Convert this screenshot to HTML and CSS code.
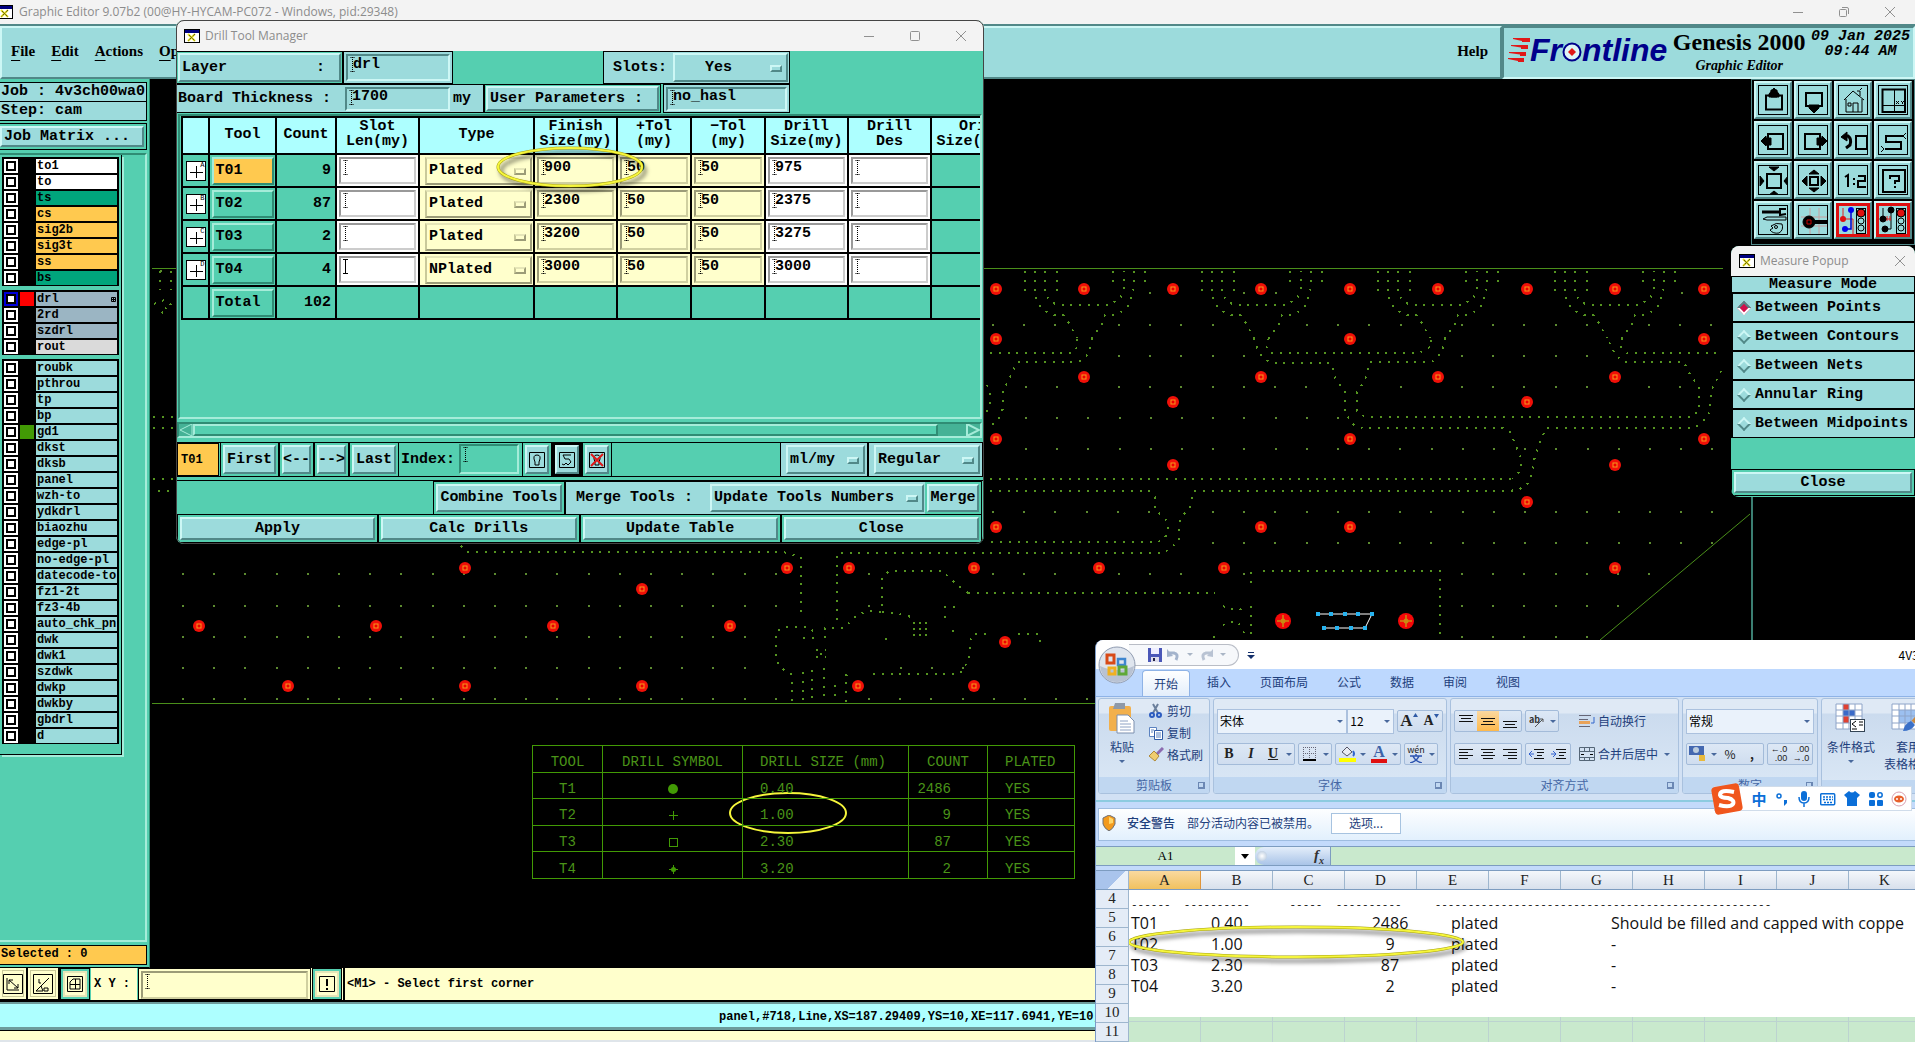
FILE: index.html
```html
<!DOCTYPE html>
<html lang="en">
<head>
<meta charset="utf-8">
<title>Graphic Editor 9.07b2</title>
<link rel="stylesheet" href="styles.css">
</head>
<body>
<svg class="defs" aria-hidden="true">
  <defs>
    <symbol id="xwin" viewBox="0 0 16 14"><rect x=".5" y=".5" width="15" height="13" fill="#fff" stroke="#000"/><rect x="1" y="1" width="14" height="3" fill="#000080"/><path d="M4 5L11 12M11 5L4 12" stroke="#e8e020" stroke-width="2"/><path d="M5 6L11 12M11 5L4 12" stroke="#222" stroke-width="1" stroke-dasharray="1 1"/></symbol>
    <g id="pad"><circle r="6" fill="#f01008"/><rect x="-2" y="-2" width="4" height="4" fill="#e00" stroke="#f59a1c"/></g>
    <g id="bigpad"><circle r="8" fill="#f40808"/><path d="M0-6V6M-6 0H6" stroke="#c98a12" stroke-width="1.5"/><circle r="2.5" fill="#c98a12"/></g>
    <g id="fan" class="trace"><path d="M1025 271V294M1057 271V294M1035 271V296L1039 305L1045 311L1054 315H1063L1067 320L1077 338M1045 271V293L1050 301L1057 305H1108L1120 299L1124 290V271M1113 271V286M1134 271V287L1129 305L1123 311L1114 315H1105L1101 326L1092 338M1145 271V286"/></g>
  </defs>
</svg>

<main class="editor">
  <header class="titlebar">
    <svg class="xicon" width="16" height="14"><use href="#xwin"/></svg>
    <h1 class="wintitle">Graphic Editor 9.07b2 (00@HY-HYCAM-PC072 - Windows, pid:29348)</h1>
    <div class="winbuttons">
      <button aria-label="Minimize"><svg width="12" height="12"><path d="M1 6.5H11"/></svg></button>
      <button aria-label="Restore"><svg width="12" height="12"><rect x="1.500" y="3.500" width="7" height="7" rx="1"/><path d="M4 1.500H9Q10.500 1.500 10.500 3V8"/></svg></button>
      <button aria-label="Close"><svg width="12" height="12"><path d="M1 1L11 11M11 1L1 11"/></svg></button>
    </div>
  </header>

  <div class="menurow">
    <nav class="menubar">
      <button><u>F</u>ile</button><button><u>E</u>dit</button><button><u>A</u>ctions</button><button><u>O</u>ptions</button>
      <button class="help">Help</button>
    </nav>
    <div class="brand">
      <div class="logo">
        <svg width="22" height="26" viewBox="0 0 22 26"><path d="M5 1H22V5H14V4L5 2ZM3 8H20V12H13V10.500L3 9ZM1 15H18V19H12V17.500L1 16ZM0 21H16V25H10V24L0 22Z" fill="#e01818"/></svg>
        <span class="logotext">Fr</span><svg class="target" width="20" height="20" viewBox="0 0 20 20"><circle cx="10" cy="10" r="8.500" fill="#dff5f5" stroke="#00008b" stroke-width="2"/><path d="M10 6L14 10L10 14L6 10Z" fill="#e01818"/></svg><span class="logotext">ntline</span>
      </div>
      <div class="product"><strong>Genesis 2000</strong><em>Graphic Editor</em></div>
      <time class="clock">09 Jan 2025<br>09:44 AM</time>
    </div>
  </div>

  <div class="workspace">
    <aside class="sidebar">
      <div class="jobinfo"><div>Job : 4v3ch00wa0</div><div>Step: cam</div></div>
      <div class="btnframe"><button class="btn matrix">Job Matrix ...</button></div>
      <div class="layerarea">
        <div class="layers">
          <div class="group">
            <label class="layer"><input type="checkbox"><span class="white">to1</span></label>
            <label class="layer"><input type="checkbox"><span class="white">to</span></label>
            <label class="layer"><input type="checkbox"><span class="green">ts</span></label>
            <label class="layer"><input type="checkbox"><span class="orange">cs</span></label>
            <label class="layer"><input type="checkbox"><span class="orange">sig2b</span></label>
            <label class="layer"><input type="checkbox"><span class="orange">sig3t</span></label>
            <label class="layer"><input type="checkbox"><span class="orange">ss</span></label>
            <label class="layer"><input type="checkbox"><span class="green">bs</span></label>
          </div>
          <div class="group">
            <label class="layer active"><input type="checkbox"><i class="red"></i><span class="steel">drl<svg width="5" height="5"><path d="M.5 .5H4.500V4.500H.5ZM2.500 0V5M0 2.500H5" fill="none" stroke="#000"/></svg></span></label>
            <label class="layer"><input type="checkbox"><span class="steel">2rd</span></label>
            <label class="layer"><input type="checkbox"><span class="steel">szdrl</span></label>
            <label class="layer"><input type="checkbox"><span class="gray">rout</span></label>
          </div>
          <div class="group">
            <label class="layer"><input type="checkbox"><span>roubk</span></label>
            <label class="layer"><input type="checkbox"><span>pthrou</span></label>
            <label class="layer"><input type="checkbox"><span>tp</span></label>
            <label class="layer"><input type="checkbox"><span>bp</span></label>
            <label class="layer"><input type="checkbox"><i class="lime"></i><span>gd1</span></label>
            <label class="layer"><input type="checkbox"><span>dkst</span></label>
            <label class="layer"><input type="checkbox"><span>dksb</span></label>
            <label class="layer"><input type="checkbox"><span>panel</span></label>
            <label class="layer"><input type="checkbox"><span>wzh-to</span></label>
            <label class="layer"><input type="checkbox"><span>ydkdrl</span></label>
            <label class="layer"><input type="checkbox"><span>biaozhu</span></label>
            <label class="layer"><input type="checkbox"><span>edge-pl</span></label>
            <label class="layer"><input type="checkbox"><span>no-edge-pl</span></label>
            <label class="layer"><input type="checkbox"><span>datecode-to</span></label>
            <label class="layer"><input type="checkbox"><span>fz1-2t</span></label>
            <label class="layer"><input type="checkbox"><span>fz3-4b</span></label>
            <label class="layer"><input type="checkbox"><span>auto_chk_pnl</span></label>
            <label class="layer"><input type="checkbox"><span>dwk</span></label>
            <label class="layer"><input type="checkbox"><span>dwk1</span></label>
            <label class="layer"><input type="checkbox"><span>szdwk</span></label>
            <label class="layer"><input type="checkbox"><span>dwkp</span></label>
            <label class="layer"><input type="checkbox"><span>dwkby</span></label>
            <label class="layer"><input type="checkbox"><span>gbdrl</span></label>
            <label class="layer"><input type="checkbox"><span>d</span></label>
          </div>
        </div>
      </div>
      <div class="selected">Selected : 0</div>
    </aside>

    <section class="canvas" aria-label="Board view">
      <svg class="board" width="1765" height="889" viewBox="150 79 1765 889">
        <g class="outline">
          <path d="M152 268.500H1723M152 703.500H1915M1600 640L1750 514"/>
          <path class="edge" d="M1752 490V640"/>
        </g>
        <g class="gridrow">
          <path d="M992 325H1060M1118 325H1215M1306 325H1402M1461 325H1590M1648 325H1715M1118 356H1246M1461 356H1590M1025 387H1060M1118 387H1308M1400 387H1402M1461 387H1590M1648 387H1684M1025 418H1340M1025 449H1715M992 512H1152M1212 512H1715M1212 543H1715M992 574H1060M1118 574H1184M1243 574H1246M1461 574H1655M1461 606H1625M1461 637H1590"/>
          <path d="M182 574H778M182 606H778M182 637H748M182 668H748M182 699H778M868 574H871M868 606H871M868 699H1090M900 668H965M160 271H163M1243 293H1246M1149 293H1152M1275 293H1277M1681 293H1683"/>
        </g>
        <g class="trace">
          <use href="#fan"/><use href="#fan" x="177"/><use href="#fan" x="353"/><use href="#fan" x="530"/>
          <path d="M990 353H1073L1078 346L1077 338M1092 338L1090 350L1086 357L1078 362H1017L1011 375L1003 391V408L1000 417L994 423L987 428M987 385L990 391V405L985 416"/>
          <path d="M1254 338L1257 348L1263 358L1271 363H1331L1336 380L1345 392V411L1349 419L1355 426L1363 428H1503L1510 432L1516 446L1521 458V470L1513 479M1269 338L1266 346L1270 353H1419L1432 346L1430 338M1445 338L1442 352L1432 362H1370L1365 380L1357 392V411L1361 415L1370 417H1692L1699 410V388L1688 371L1684 362H1624L1616 356L1607 338M1622 338L1620 346L1627 353H1722"/>
          <path d="M990 479H1513M1721 371L1711 391V400L1708 417L1694 428H1546L1541 440L1535 456L1530 482L1520 489L1510 491H1194L1190 507L1181 518L1179 527V540L1170 549L1162 553H837V620M990 491H1149L1155 497V508L1161 516L1168 522V530L1165 538L1158 542H990"/>
          <path d="M968 593H1215M1263 571H1440V640M1251 572V585M1251 606V640M461 546L467 552H783L801 557V618M968 593L954 582L942 571H889L882 579V612L870 611L858 614L844 628H825V640M882 612L905 615L914 618M813 631L808 627H783L776 632V658L780 667L792 675V702M803 672V702M812 670V702M824 668V702M835 685V702M846 702V675L854 673M873 674H960L969 659L970 641L973 634H990M1018 634H1038L1040 642M153 417H176M153 428H176M153 479H176M158 491H176M160 271V290M171 271V290M154 304L164 300L172 305L160 311L168 316"/>
          <path d="M944 607H956M944 617H946M952 631H954M885 639H887M803 638H816M816 650H826M816 657H826M820 654H822M1223 606L1228 608L1238 611L1245 606M1223 625L1228 622L1238 622L1245 635M1213 637H1215"/>
          <path class="fine" d="M913 623H928M913 629H928M913 635H928"/>
        </g>
        <g>
          <use href="#pad" x="996" y="289"/><use href="#pad" x="1084" y="289"/><use href="#pad" x="1173" y="289"/><use href="#pad" x="1261" y="289"/><use href="#pad" x="1350" y="289"/><use href="#pad" x="1438" y="289"/><use href="#pad" x="1527" y="289"/><use href="#pad" x="1615" y="289"/><use href="#pad" x="1704" y="289"/>
          <use href="#pad" x="996" y="339"/><use href="#pad" x="1350" y="339"/><use href="#pad" x="1704" y="339"/>
          <use href="#pad" x="1084" y="377"/><use href="#pad" x="1261" y="377"/><use href="#pad" x="1438" y="377"/><use href="#pad" x="1615" y="377"/>
          <use href="#pad" x="1173" y="402"/><use href="#pad" x="1527" y="402"/>
          <use href="#pad" x="996" y="439"/><use href="#pad" x="1350" y="439"/><use href="#pad" x="1704" y="439"/>
          <use href="#pad" x="1173" y="465"/><use href="#pad" x="1615" y="465"/><use href="#pad" x="1527" y="502"/>
          <use href="#pad" x="996" y="527"/><use href="#pad" x="1261" y="527"/><use href="#pad" x="1350" y="527"/>
          <use href="#pad" x="465" y="568"/><use href="#pad" x="787" y="568"/><use href="#pad" x="849" y="568"/><use href="#pad" x="974" y="568"/><use href="#pad" x="1099" y="568"/><use href="#pad" x="1224" y="568"/><use href="#pad" x="1615" y="568"/>
          <use href="#pad" x="642" y="589"/><use href="#pad" x="199" y="626"/><use href="#pad" x="376" y="626"/><use href="#pad" x="553" y="626"/><use href="#pad" x="730" y="626"/><use href="#pad" x="1005" y="642"/>
          <use href="#pad" x="288" y="686"/><use href="#pad" x="465" y="686"/><use href="#pad" x="642" y="686"/><use href="#pad" x="858" y="686"/><use href="#pad" x="974" y="686"/>
          <use href="#bigpad" x="1283" y="621"/><use href="#bigpad" x="1406" y="621"/>
        </g>
        <path d="M1318 614H1372L1365 628H1324" fill="none" stroke="#fff"/>
        <path d="M1316 614H1320M1329 614H1333M1343 614H1347M1356 614H1360M1370 614H1374M1363 628H1367M1349 628H1353M1335 628H1339M1322 628H1326" stroke="#28b4f0" stroke-width="4"/>
        <ellipse class="mark" cx="788" cy="813" rx="58" ry="20"/>
      </svg>
      <table class="cadtable">
        <colgroup><col class="c1"><col class="c2"><col class="c3"><col class="c4"><col class="c5"></colgroup>
        <tr><th>TOOL</th><th>DRILL SYMBOL</th><th>DRILL SIZE (mm)</th><th>COUNT</th><th>PLATED</th></tr>
        <tr><td>T1</td><td><svg width="12" height="12"><circle cx="6" cy="6" r="5" fill="#429a05"/></svg></td><td>0.40</td><td>2486</td><td>YES</td></tr>
        <tr><td>T2</td><td><svg width="12" height="12"><path d="M6.500 2V11M2 6.500H11" stroke="#429a05"/></svg></td><td>1.00</td><td>9</td><td>YES</td></tr>
        <tr><td>T3</td><td><svg width="12" height="12"><rect x="2.500" y="2.500" width="8" height="8" fill="none" stroke="#429a05"/></svg></td><td>2.30</td><td>87</td><td>YES</td></tr>
        <tr><td>T4</td><td><svg width="12" height="12"><path d="M6.500 2V11M2 6.500H11" stroke="#429a05"/><circle cx="6.500" cy="6.500" r="2.500" fill="#429a05"/></svg></td><td>3.20</td><td>2</td><td>YES</td></tr>
      </table>

      <div class="toolpad">
        <button class="btn" aria-label="Pan up"><svg class="ic"><path d="M7 9.500H23V23.500H7Z" class="w2"/><path d="M12 4H18V11H12ZM10 8L15 2L20 8V11H10Z" class="f"/></svg></button>
        <button class="btn" aria-label="Pan down"><svg class="ic"><path d="M7 7H23V20H7Z" class="w2"/><path d="M10 19H20V22L15 27L10 22Z" class="f"/></svg></button>
        <button class="btn" aria-label="Home"><svg class="ic"><path d="M5 14L14 5L25 14M7 13V26H23V13M21 10V5H18M21 4L23 2M14 26V17H19V26M9 17H12V20H9Z"/></svg></button>
        <button class="btn" aria-label="XY window"><svg class="ic"><path d="M3.500 3.500H26V26H3.500Z" class="w2"/><path d="M15.500 4V26M4 19.500H26M17 15L20 18M20 15L17 18M22 15L23.500 16.500L25 15M23.500 16V18"/></svg></button>
        <button class="btn" aria-label="Pan left"><svg class="ic"><path d="M9 8H24V23H9Z" class="w2"/><path d="M2 15L7 10V12H12V19H7V20Z" class="f"/></svg></button>
        <button class="btn" aria-label="Pan right"><svg class="ic"><path d="M6 8H21V23H6Z" class="w2"/><path d="M28 15L23 10V12H18V19H23V20Z" class="f"/></svg></button>
        <button class="btn" aria-label="Previous view"><svg class="ic"><path d="M17 10H28V23H17Z" class="w2"/><path d="M6 10H9Q13 13 11 19L7 22" stroke-width="3"/><path d="M2 11L8 6V15Z" class="f"/></svg></button>
        <button class="btn" aria-label="Snake"><svg class="ic"><path d="M24 10H7V16H22V23H6" class="w2"/><path d="M24 10L27 7M24 10L27 13M5 23L2 20M5 23L2 26"/></svg></button>
        <button class="btn" aria-label="Zoom in"><svg class="ic"><path d="M8 8H22V22H8Z" class="w2"/><path d="M10 1H20L15 5ZM10 29H20L15 25ZM1 10V20L5 15ZM29 10V20L25 15Z" class="f"/></svg></button>
        <button class="btn" aria-label="Zoom out"><svg class="ic"><path d="M11 11H19V19H11Z" class="w2"/><path d="M10 8H20L15 4ZM10 22H20L15 26ZM8 10V20L3 15ZM22 10V20L27 15Z" class="f"/></svg></button>
        <button class="btn" aria-label="Scale"><svg class="ic"><path d="M6 11L9 9V21M14 13H16M14 18H16M19 10H26V15H19V21H27" class="w2"/></svg></button>
        <button class="btn" aria-label="Help"><svg class="ic"><path d="M4 4H26V26H4ZM11 13V10H20V15H16V18M16 20V22" class="w2"/></svg></button>
        <button class="btn" aria-label="Tools"><svg class="ic"><path d="M3 6H20" stroke-width="3"/><path d="M27 3L21 3V9L27 8" stroke-width="2"/><path d="M4 13L8 11H27V14H8ZM12 20Q17 16 23 18Q25 24 20 27Q14 28 11 24L14 22Z"/><circle cx="17" cy="21" r="1.500"/></svg></button>
        <button class="btn" aria-label="Drill probe"><svg class="ic"><path d="M11 2V28M20 2V28M2 11H28M2 20H28" stroke="#c9a0a0"/><circle cx="10" cy="16" r="6" class="f"/><path d="M14 16H28" stroke-width="4"/><path d="M8 14H12V18H8Z" stroke="#c00"/></svg></button>
        <button class="btn alert" aria-label="Net stop"><svg class="ic"><path d="M4 2V13H14V28" stroke="#e02020"/><path d="M12 4V23H6" stroke="#00c" stroke-width="1.500"/><circle cx="4" cy="13" r="3" fill="#e01010" stroke="none"/><circle cx="12" cy="4" r="3" fill="#00e" stroke="none"/><circle cx="6" cy="23" r="3" fill="#00e" stroke="none"/><rect x="17.500" y="2.500" width="9" height="25"/><circle cx="22" cy="7" r="4" fill="#e01010"/><circle cx="22" cy="15" r="3"/><circle cx="22" cy="22" r="3"/></svg></button>
        <button class="btn alert" aria-label="Net check"><svg class="ic"><path d="M4 2V13H8M12 4V23H6"/><path d="M7 13H12M8 10V15M11 10V15" stroke="#e02020"/><circle cx="4" cy="13" r="3" class="f"/><circle cx="12" cy="4" r="3" class="f"/><circle cx="6" cy="23" r="3" class="f"/><rect x="17.500" y="2.500" width="9" height="25"/><circle cx="22" cy="7" r="4" fill="#e01010"/><circle cx="22" cy="15" r="3"/><circle cx="22" cy="22" r="3"/></svg></button>
      </div>
    </section>
  </div>

  <div class="cmdbar">
    <button class="cream first" aria-label="Select box"><svg width="20" height="20"><path d="M.5 .5H19.500V19.500H.5ZM4 4V16H16M6 6L15 14M6 10V6H10M11 14H15V10"/></svg></button>
    <button class="cream wide" aria-label="Select angle"><svg width="20" height="20"><path d="M.5 .5H19.500V19.500H.5ZM3 17L16 4M3 17H10M6 5V9H8M8 12L10 17M11 14H15V17H11Z"/></svg></button>
    <button class="cream on" aria-label="Grid"><svg width="16" height="16"><path d="M.5 .5H15.500V15.500H.5ZM3 13V6L6 3H13V13ZM3 8.500H13M8.500 3V13"/></svg></button>
    <label class="xy" for="xy">X Y :</label>
    <div class="xyfield"><input id="xy" class="field cream" type="text"></div>
    <button class="cream on" aria-label="Alert"><svg width="16" height="16"><path d="M.5 .5H15.500V15.500H.5Z"/><path d="M8 3V10M8 12V14" stroke-width="2"/></svg></button>
    <p class="hint">&lt;M1&gt; - Select first corner</p>
  </div>
  <div class="status">panel,#718,Line,XS=187.29409,YS=10,XE=117.6941,YE=10,r</div>
  <div class="footer"></div>
</main>

<section class="window drill">
  <header class="titlebar">
    <svg class="xicon" width="16" height="14"><use href="#xwin"/></svg>
    <h2 class="wintitle">Drill Tool Manager</h2>
    <div class="winbuttons">
      <button aria-label="Minimize"><svg width="12" height="12"><path d="M1 6.500H11"/></svg></button>
      <button aria-label="Maximize"><svg width="12" height="12"><rect x="1.500" y="1.500" width="9" height="9" rx="1"/></svg></button>
      <button aria-label="Close"><svg width="12" height="12"><path d="M1 1L11 11M11 1L1 11"/></svg></button>
    </div>
  </header>
  <div class="row r1">
    <div class="btnframe layerbtn"><button class="btn spread"><span>Layer</span><span>:</span></button></div>
    <div class="cell layerfield"><input class="field" aria-label="Layer" value="drl"></div>
    <div class="cell slots"><label for="slots">Slots:</label><span class="opt"><select id="slots" class="btn"><option>Yes</option></select></span></div>
  </div>
  <div class="row r2">
    <div class="cell thick"><label for="thick">Board Thickness :</label><input id="thick" class="field" value="1700"><span>my</span></div>
    <div class="btnframe params"><button class="btn spread"><span>User Parameters :</span></button></div>
    <div class="cell hasl"><input class="field" aria-label="User parameters" value="no_hasl"></div>
  </div>
  <div class="tableframe">
    <table class="tools">
      <colgroup><col class="t0"><col class="t1"><col class="t2"><col class="t3"><col class="t4"><col class="t3"><col class="t5"><col class="t5"><col class="t3"><col class="t3"><col class="t3"></colgroup>
      <thead><tr><th></th><th>Tool</th><th>Count</th><th>Slot<br>Len(my)</th><th>Type</th><th>Finish<br>Size(my)</th><th>+Tol<br>(my)</th><th>−Tol<br>(my)</th><th>Drill<br>Size(my)</th><th>Drill<br>Des</th><th>Ori<br>Size(my)</th></tr></thead>
      <tbody>
        <tr><td><i class="sym"><sup>A</sup></i></td><td><button class="tbtn sel">T01</button></td><td class="num">9</td><td class="wh"><input class="field" aria-label="Slot length"></td><td class="ye"><span class="opt"><select class="btn" aria-label="Type"><option>Plated</option></select></span></td><td class="ye"><input class="field" aria-label="Finish size" value="900"></td><td class="ye"><input class="field" aria-label="Plus tolerance" value="50"></td><td class="ye"><input class="field" aria-label="Minus tolerance" value="50"></td><td class="wh"><input class="field" aria-label="Drill size" value="975"></td><td class="wh"><input class="field" aria-label="Drill designator"></td><td></td></tr>
        <tr><td><i class="sym"><sup>B</sup></i></td><td><button class="tbtn">T02</button></td><td class="num">87</td><td class="wh"><input class="field" aria-label="Slot length"></td><td class="ye"><span class="opt"><select class="btn" aria-label="Type"><option>Plated</option></select></span></td><td class="ye"><input class="field" aria-label="Finish size" value="2300"></td><td class="ye"><input class="field" aria-label="Plus tolerance" value="50"></td><td class="ye"><input class="field" aria-label="Minus tolerance" value="50"></td><td class="wh"><input class="field" aria-label="Drill size" value="2375"></td><td class="wh"><input class="field" aria-label="Drill designator"></td><td></td></tr>
        <tr><td><i class="sym"><sup>C</sup></i></td><td><button class="tbtn">T03</button></td><td class="num">2</td><td class="wh"><input class="field" aria-label="Slot length"></td><td class="ye"><span class="opt"><select class="btn" aria-label="Type"><option>Plated</option></select></span></td><td class="ye"><input class="field" aria-label="Finish size" value="3200"></td><td class="ye"><input class="field" aria-label="Plus tolerance" value="50"></td><td class="ye"><input class="field" aria-label="Minus tolerance" value="50"></td><td class="wh"><input class="field" aria-label="Drill size" value="3275"></td><td class="wh"><input class="field" aria-label="Drill designator"></td><td></td></tr>
        <tr><td><i class="sym"><sup>D</sup></i></td><td><button class="tbtn">T04</button></td><td class="num">4</td><td class="wh"><input class="field solid" aria-label="Slot length"></td><td class="ye"><span class="opt"><select class="btn" aria-label="Type"><option>NPlated</option></select></span></td><td class="ye"><input class="field" aria-label="Finish size" value="3000"></td><td class="ye"><input class="field" aria-label="Plus tolerance" value="50"></td><td class="ye"><input class="field" aria-label="Minus tolerance" value="50"></td><td class="wh"><input class="field" aria-label="Drill size" value="3000"></td><td class="wh"><input class="field" aria-label="Drill designator"></td><td></td></tr>
        <tr><td></td><td><button class="tbtn">Total</button></td><td class="num">102</td><td></td><td></td><td></td><td></td><td></td><td></td><td></td><td></td></tr>
      </tbody>
    </table>
    <svg class="callout" width="160" height="52"><ellipse cx="78" cy="24" rx="72" ry="19"/><ellipse class="inner" cx="78" cy="24" rx="72" ry="19"/></svg>
  </div>
  <div class="scrollbar">
    <svg width="14" height="12"><path d="M13 0V12L1 6Z" fill="#45b296" stroke="#a5ecd9"/></svg>
    <i class="thumb"></i>
    <svg width="14" height="12"><path d="M1 0V12L13 6Z" fill="#45b296" stroke="#a5ecd9" stroke-width="2"/></svg>
  </div>
  <div class="row r3">
    <div class="current">T01</div>
    <div class="btnframe f59"><button class="btn">First</button></div>
    <div class="btnframe f35"><button class="btn">&lt;--</button></div>
    <div class="btnframe f35"><button class="btn">--&gt;</button></div>
    <div class="btnframe f50"><button class="btn">Last</button></div>
    <label class="index" for="idx">Index:</label><input id="idx" class="field idx">
    <div class="btnframe f30"><button class="btn" aria-label="Highlight"><svg width="16" height="16"><path d="M.5 .5H15.500V15.500H.5ZM6 10Q3 3 8 3Q13 3 10 10V13H6Z"/></svg></button></div>
    <div class="btnframe f30 dark"><button class="btn" aria-label="Snake"><svg width="16" height="16"><path d="M.5 .5H15.500V15.500H.5ZM12 3H4L6 7H10L12 10L9 13L7 11L5 13L3 12"/></svg></button></div>
    <div class="btnframe f30"><button class="btn" aria-label="Clear highlight"><svg width="16" height="16"><path d="M.5 .5H15.500V15.500H.5ZM6 10Q3 3 8 3Q13 3 10 10V13H6Z"/><path d="M2 2L14 14M14 2L2 14" stroke="#e01818" stroke-width="2"/></svg></button></div>
    <div class="cell units"><span class="opt"><select class="btn" aria-label="Units"><option>ml/my</option></select></span></div>
    <div class="cell regular"><span class="opt"><select class="btn" aria-label="Mode"><option>Regular</option></select></span></div>
  </div>
  <div class="row r4">
    <div class="btnframe combine"><button class="btn">Combine Tools</button></div>
    <div class="cell merge"><label for="merge">Merge Tools :</label><span class="opt"><select id="merge" class="btn"><option>Update Tools Numbers</option></select></span></div>
    <div class="btnframe mergebtn"><button class="btn">Merge</button></div>
  </div>
  <div class="row r5">
    <div class="btnframe"><button class="btn">Apply</button></div>
    <div class="btnframe"><button class="btn">Calc Drills</button></div>
    <div class="btnframe"><button class="btn">Update Table</button></div>
    <div class="btnframe"><button class="btn">Close</button></div>
  </div>
</section>

<section class="window measure">
  <header class="titlebar">
    <svg class="xicon" width="16" height="14"><use href="#xwin"/></svg>
    <h2 class="wintitle">Measure Popup</h2>
    <div class="winbuttons"><button aria-label="Close"><svg width="12" height="12"><path d="M1 1L11 11M11 1L1 11"/></svg></button></div>
  </header>
  <fieldset class="modes">
    <legend>Measure Mode</legend>
    <label><input type="radio" name="mode" checked>Between Points</label>
    <label><input type="radio" name="mode">Between Contours</label>
    <label><input type="radio" name="mode">Between Nets</label>
    <label><input type="radio" name="mode">Annular Ring</label>
    <label><input type="radio" name="mode">Between Midpoints</label>
  </fieldset>
  <div class="btnframe"><button class="btn">Close</button></div>
</section>

<section class="window excel" lang="zh-CN">
  <header class="xltitle">
    <div class="quick">
      <button aria-label="保存"><svg width="14" height="14"><path d="M0 0H14V14H0Z" fill="#4a57b8"/><path d="M3 0H11V6H3Z" fill="#eef"/><path d="M3 9H11V14H3Z" fill="#dde"/><path d="M5 10H7V13H5Z" fill="#224"/></svg></button>
      <button aria-label="撤消"><svg width="13" height="13"><path d="M2 5H7Q12 6 9 12" fill="none" stroke="#a3b3cc" stroke-width="3"/><path d="M0 1V9L6 8Z" fill="#a3b3cc"/></svg></button><i class="arr dim"></i>
      <button aria-label="恢复"><svg width="13" height="13"><path d="M11 5H6Q1 6 4 12" fill="none" stroke="#b9c3d3" stroke-width="3"/><path d="M13 1V9L7 8Z" fill="#b9c3d3"/></svg></button><i class="arr dim"></i>
    </div>
    <button class="qmore" aria-label="自定义快速访问工具栏"><svg width="8" height="8"><path d="M1 1.500H7" stroke="#15306b"/><path d="M0 4H8L4 8Z" fill="#15306b"/></svg></button>
    <span class="doc">4V3CH00WA0</span>
  </header>
  <nav class="tabs"><button class="cur">开始</button><button>插入</button><button>页面布局</button><button>公式</button><button>数据</button><button>审阅</button><button>视图</button></nav>
  <button class="orb" aria-label="Office"><svg width="38" height="38" viewBox="0 0 38 38"><circle cx="19" cy="19" r="18" fill="#dfe5ee" stroke="#8f9bb0"/><path d="M2 20Q19 28 36 20Q34 36 19 36Q4 36 2 20Z" fill="#b8c2d3"/><g fill="none" stroke-width="3"><path d="M9 9H16V17H9Z" stroke="#d84a18"/><path d="M20 13H27V19H20Z" stroke="#3f86cf" stroke-width="2.500"/><path d="M11 22H17V28H11Z" stroke="#f0b020"/><path d="M21 21H28V28H21Z" stroke="#5fa838"/></g></svg></button>
  <div class="ribbon">
    <div class="grp clip">
      <div class="body">
        <button class="paste"><svg width="28" height="31"><rect x="1" y="3" width="22" height="25" rx="2" fill="#f2b04c"/><path d="M7 0H17V6H5Z" fill="#8e99a8"/><path d="M9 12H20L26 18V30H9Z" fill="#fff" stroke="#7d8fae"/><path d="M12 18H20M12 21H23M12 24H23M12 27H23" stroke="#8ea2c4"/></svg>粘贴<i class="arr"></i></button>
        <div class="stack">
          <button><svg width="16" height="16"><path d="M5 1L10 10M10 1L5 10" stroke="#6b7f9c" stroke-width="2"/><circle cx="4" cy="12" r="2" fill="none" stroke="#2c5cc0" stroke-width="2"/><circle cx="11" cy="12" r="2" fill="none" stroke="#2c5cc0" stroke-width="2"/></svg>剪切</button>
          <button><svg width="16" height="16"><path d="M1.500 2.500H8.500V11.500H1.500Z" fill="#fff" stroke="#5b82c0"/><path d="M6.500 5.500H14.500V14.500H6.500Z" fill="#fff" stroke="#2f5aa5"/><path d="M8 8H13M8 10H13M8 12H13M3 5H6M3 7H5" stroke="#5b82c0"/></svg>复制</button>
          <button><svg width="16" height="16"><path d="M15 1L9 7" stroke="#8b6bb0" stroke-width="3"/><path d="M6 4L11 9L7 14L1 9Z" fill="#f0cd70" stroke="#b08a3a"/></svg>格式刷</button>
        </div>
      </div>
      <div class="name">剪贴板<i class="launch"></i></div>
    </div>
    <div class="grp font">
      <div class="body col">
        <div class="line"><span class="xopt fname"><select class="xsel" aria-label="字体"><option>宋体</option></select></span><span class="xopt fsize"><select class="xsel" aria-label="字号"><option>12</option></select></span><span class="set"><button class="serif big" aria-label="增大字号">A<svg width="5" height="16"><path d="M0 4L2.500 0L5 4Z" fill="#2f5aa5"/></svg></button><button class="serif" aria-label="减小字号">A<svg width="5" height="16"><path d="M0 1L2.500 5L5 1Z" fill="#2f5aa5"/></svg></button></span></div>
        <div class="line"><span class="set"><button class="serif"><b>B</b></button><button class="serif"><em>I</em></button><button class="serif"><u>U</u></button><i class="arr"></i></span><span class="set"><button aria-label="边框"><svg width="14" height="14"><path d="M.5 0V12M6.500 0V12M12.500 0V12M0 .5H13M0 6.500H13" stroke="#667" stroke-dasharray="1 1"/><path d="M0 13H13" stroke="#000" stroke-width="2"/></svg></button><i class="arr"></i></span><span class="set"><button aria-label="填充颜色"><svg width="17" height="16"><path d="M8 1L13 6L8 10L3 6Z" fill="#e8ecf4" stroke="#556"/><path d="M14 5Q16 8 14 10" stroke="#36c" stroke-width="2" fill="none"/><path d="M0 12H17V16H0Z" fill="#ff0"/></svg></button><i class="arr"></i><button class="serif fcolor">A</button><i class="arr"></i></span><span class="set"><button class="wen" aria-label="拼音指南"><small>wén</small><svg width="12" height="9"><path d="M6 0V2M0 2H12M3 2Q5 7 12 9M9 2Q7 7 0 9" fill="none" stroke="#2c54b0" stroke-width="1.500"/></svg></button><i class="arr"></i></span></div>
      </div>
      <div class="name">字体<i class="launch"></i></div>
    </div>
    <div class="grp align">
      <div class="body col">
        <div class="line"><span class="set"><button aria-label="顶端对齐"><svg class="al"><path d="M1 1.500H15M3 4.500H13M1 7.500H15"/></svg></button><button class="hot" aria-label="垂直居中"><svg class="al"><path d="M1 4.500H15M3 7.500H13M1 10.500H15"/></svg></button><button aria-label="底端对齐"><svg class="al"><path d="M1 7.500H15M3 10.500H13M1 13.500H15"/></svg></button></span><span class="set"><button aria-label="方向"><svg width="16" height="16"><text x="0" y="10" font-size="9" font-weight="bold" fill="#333">ab</text><path d="M6 14L14 6M14 6H11M14 6V9" stroke="#555" fill="none"/></svg></button><i class="arr"></i></span><button class="txt"><svg width="16" height="14"><path d="M0 1.500H12M0 12.500H11M0 5.500H9" stroke="#667"/><path d="M0 7H11V10H0Z" fill="#e9a35a"/><path d="M15 3V9H12" stroke="#36c" fill="none"/></svg>自动换行</button></div>
        <div class="line"><span class="set"><button aria-label="左对齐"><svg class="al"><path d="M1 2.500H15M1 5.500H10M1 8.500H15M1 11.500H10"/></svg></button><button aria-label="居中"><svg class="al"><path d="M1 2.500H15M3 5.500H13M1 8.500H15M3 11.500H13"/></svg></button><button aria-label="右对齐"><svg class="al"><path d="M1 2.500H15M6 5.500H15M1 8.500H15M6 11.500H15"/></svg></button></span><span class="set"><button aria-label="减少缩进"><svg class="al"><path d="M5 2.500H15M8 5.500H15M8 8.500H13M5 11.500H15"/><path d="M0 7H5M0 7L3 4M0 7L3 10" stroke="#3060d0"/></svg></button><button aria-label="增加缩进"><svg class="al"><path d="M5 2.500H15M8 5.500H15M8 8.500H13M5 11.500H15"/><path d="M0 7H5M5 7L2 4M5 7L2 10" stroke="#3060d0"/></svg></button></span><button class="txt"><svg width="16" height="14"><path d="M.5 .5H15.500V13.500H.5ZM0 4.500H16M0 10.500H16M5.500 0V4M10.500 0V4M5.500 11V14M10.500 11V14" fill="none" stroke="#567"/><path d="M2 7.500H5M11 7.500H14" stroke="#000"/></svg>合并后居中<i class="arr"></i></button></div>
      </div>
      <div class="name">对齐方式<i class="launch"></i></div>
    </div>
    <div class="grp number">
      <div class="body col">
        <div class="line"><span class="xopt fnum"><select class="xsel" aria-label="数字格式"><option>常规</option></select></span></div>
        <div class="line"><span class="set"><button aria-label="货币"><svg width="18" height="16"><rect width="15" height="9" fill="#4468b0"/><circle cx="7" cy="4" r="3" fill="#bcd"/><path d="M10 9H16V15H10Z" fill="#e8b93c"/></svg></button><i class="arr"></i><button>%</button><button><b>,</b></button></span><span class="set dec"><button><small>←.0<br>.00</small></button><button><small>.00<br>→.0</small></button></span></div>
      </div>
      <div class="name">数字<i class="launch"></i></div>
    </div>
    <div class="grp styles">
      <div class="body">
        <button class="paste wide"><svg width="32" height="30"><path d="M1 1H27V26H1Z" fill="#fff"/><path d="M8 1H14V20H8Z" fill="#e04030"/><path d="M8 7H20V13H8Z" fill="#3a6ac8"/><path d="M1 1H27V26H1ZM1 7H27M1 13H27M1 20H27M8 1V26M14 1V26M20 1V26" fill="none" stroke="#8ea4c8"/><rect x="15.500" y="16.500" width="14" height="12" fill="#fff" stroke="#345"/><path d="M21 18L17 21L21 24M24 19H28M24 22H28M17 26H22" stroke="#000" fill="none"/></svg>条件格式<i class="arr"></i></button>
        <button class="paste wide"><svg width="34" height="30"><path d="M1 1H27V26H1Z" fill="#fff"/><path d="M8 7H27V20H8Z" fill="#9cc0f0"/><path d="M1 1H27V26H1ZM1 7H27M1 13H27M1 20H27M8 1V26M14 1V26M20 1V26" fill="none" stroke="#8ea4c8"/><path d="M12 28Q14 20 20 18L24 22Q20 28 12 28Z" fill="#3a70c8"/><path d="M22 19L32 8" stroke="#c98a40" stroke-width="4"/></svg><span>套用<br>表格格式</span></button>
      </div>
      <div class="name"></div>
    </div>
  </div>
  <div class="security">
    <svg width="14" height="16"><path d="M7 0L13 3V9Q11 14 7 16Q2 13 1 9V3Z" fill="#f39a1d" stroke="#6b6f78"/><path d="M7 2L11 4V8L7 9Z" fill="#ffd76a"/></svg>
    <strong>安全警告</strong><span>部分活动内容已被禁用。</span><button>选项...</button>
  </div>
  <div class="formula"><input class="namebox" aria-label="名称框" value="A1"><i class="drop"><i class="arr blk"></i></i><span class="fx"><i class="knob"></i><em>f<sub>x</sub></em></span><input class="fline" aria-label="编辑栏"></div>
  <div class="sheet">
    <div class="colheads"><i class="corner"></i><span class="on">A</span><span>B</span><span>C</span><span>D</span><span>E</span><span>F</span><span>G</span><span>H</span><span>I</span><span>J</span><span>K</span></div>
    <div class="rows">
      <div class="rowheads"><span>4</span><span>5</span><span>6</span><span>7</span><span>8</span><span>9</span><span>10</span><span>11</span></div>
      <div class="cells">
        <table class="drills">
          <colgroup><col class="d1"><col class="d2"><col class="d3"><col class="d4"><col class="d5"><col></colgroup>
          <tr class="dash"><td colspan="6">------  ----------      -----  ----------     ---------------------------------------------------</td></tr>
          <tr><td>T01</td><td>0.40</td><td></td><td>2486</td><td>plated</td><td>Should be filled and capped with coppe</td></tr>
          <tr><td>T02</td><td>1.00</td><td></td><td>9</td><td>plated</td><td>-</td></tr>
          <tr><td>T03</td><td>2.30</td><td></td><td>87</td><td>plated</td><td>-</td></tr>
          <tr><td>T04</td><td>3.20</td><td></td><td>2</td><td>plated</td><td>-</td></tr>
        </table>
        <svg class="callout" width="350" height="46"><ellipse cx="170" cy="20" rx="167" ry="15"/><ellipse class="inner" cx="170" cy="20" rx="167" ry="15"/></svg>
      </div>
    </div>
  </div>
  <div class="ime">
    <svg class="sogou" width="32" height="32" viewBox="0 0 32 32"><rect x="2" y="2" width="28" height="28" rx="4" fill="#f0561d" transform="rotate(-10 16 16)"/><path d="M23 9Q9 6 9 12Q10 15 17 15Q24 17 22 21Q19 25 8 22" fill="none" stroke="#fff" stroke-width="4"/></svg>
    <b>中</b>
    <svg width="14" height="14"><circle cx="4" cy="4" r="2" fill="none" stroke="#0b6fd8" stroke-width="1.500"/><path d="M9 8H12V11L9 14" fill="#0b6fd8"/></svg>
    <svg width="14" height="16"><rect x="4" y="0" width="6" height="10" rx="3" fill="#0b6fd8"/><path d="M2 6Q2 12 7 12Q12 12 12 6M7 12V16" fill="none" stroke="#0b6fd8" stroke-width="1.500"/></svg>
    <svg width="16" height="14"><rect x=".7" y="1.700" width="14" height="11" rx="1" fill="none" stroke="#0b6fd8" stroke-width="1.500"/><path d="M3 5H13M3 7.500H13M4 10.500H12" stroke="#0b6fd8" stroke-dasharray="2 1" stroke-width="1.500"/></svg>
    <svg width="16" height="15"><path d="M5 0Q8 3 11 0L16 4L13 7V15H3V7L0 4Z" fill="#0b6fd8"/></svg>
    <svg width="14" height="14"><rect width="6" height="6" rx="2" fill="#0b6fd8"/><circle cx="11" cy="3" r="2.200" fill="none" stroke="#0b6fd8" stroke-width="1.500"/><rect y="8" width="6" height="6" rx="1" fill="#0b6fd8"/><rect x="8" y="8" width="6" height="6" rx="1" fill="#0b6fd8"/></svg>
    <svg width="16" height="16"><circle cx="8" cy="8" r="7" fill="#fff" stroke="#d9a0b0"/><ellipse cx="8" cy="8" rx="5" ry="3.500" fill="#e8602c"/><circle cx="6" cy="8" r="1" fill="#fff"/><circle cx="10" cy="8" r="1" fill="#fff"/></svg>
  </div>
</section>
</body>
</html>
```
FILE: styles.css
```css
:root {
  --teal: #55cfb0;
  --teal-lt: #a5ecd9;
  --teal-dk: #2f8c74;
  --aqua: #9cdbdc;
  --aqua-lt: #cdf7f5;
  --aqua-dk: #518888;
  --cyan: #adffff;
  --cream: #ffffcc;
  --orange: #ffc94f;
  --mono: "Liberation Mono", "Courier New", monospace;
  --ui: "Open Sans", "Noto Sans", sans-serif;
  --cjk: "Noto Sans CJK SC", "Noto Sans", sans-serif;
}
*, *::after { box-sizing: border-box; }
body { margin: 0; min-height: 100vh; position: relative; overflow: hidden; background: #000; font: bold 15px/18px var(--mono); color: #000; }
button, input, select { font: inherit; color: inherit; margin: 0; padding: 0; border: 0; background: none; border-radius: 0; min-width: 0; }
svg { display: block; flex: none; }
h1, h2, p { margin: 0; }
.defs { position: absolute; width: 0; height: 0; }

.editor { display: flex; flex-direction: column; height: 100vh; }
.titlebar { display: flex; align-items: center; background: #f3f3f3; }
.wintitle { flex: 1; margin-left: 4px; font: 12px/16px var(--ui); color: #8c8c8c; white-space: nowrap; }
.winbuttons { display: flex; }
.winbuttons button { width: 46px; display: flex; justify-content: center; }
.winbuttons svg { fill: none; stroke: #909090; }
.editor > .titlebar { height: 24px; margin-left: -3px; padding-right: 2px; }
.editor > .titlebar .wintitle { margin-left: 6px; }

.menurow { display: flex; height: 55px; background: var(--aqua); border-top: 2px solid var(--aqua-dk); }
.menubar { flex: 1; display: flex; align-items: center; padding: 0 0 4px 9px; gap: 16px; border: 2px solid; border-color: var(--aqua-lt) var(--aqua-dk) var(--aqua-dk) var(--aqua-lt); font: bold 15px/22px "Liberation Serif", serif; }
.menubar u { text-underline-offset: 4px; }
.menubar .help { margin-left: auto; margin-right: 12px; }
.brand { width: 413px; display: flex; gap: 4px; padding: 1px 3px 0 4px; border: 2px solid; border-color: var(--aqua-dk) var(--aqua-lt) var(--aqua-lt) var(--aqua-dk); }
.logo { display: flex; align-items: center; width: 160px; padding-bottom: 6px; }
.logotext { font: italic bold 32px/40px "Liberation Sans", sans-serif; color: #00008b; }
.target { margin-top: 4px; }
.product { width: 136px; display: flex; flex-direction: column; align-items: center; font-family: "Liberation Serif", serif; white-space: nowrap; }
.product strong { font-size: 24px; line-height: 26px; }
.product em { font-size: 14px; line-height: 22px; }
.clock { flex: 1; font: italic bold 15px/15px var(--mono); text-align: center; white-space: nowrap; }

.workspace { flex: 1; display: flex; min-height: 0; }
.sidebar { width: 150px; background: var(--teal); display: flex; flex-direction: column; padding: 3px 2px 2px 0; border-right: 1px solid var(--teal-dk); border-bottom: 1px solid #000; }
.jobinfo div { height: 20px; margin-bottom: -1px; background: var(--aqua); border: 1px solid #000; border-left: 0; padding-left: 1px; white-space: nowrap; }
.btnframe { display: flex; border: 1px solid #000; background: var(--teal); padding: 2px; }
.btn { flex: 1; background: var(--aqua); border: 2px solid; border-color: var(--aqua-lt) var(--aqua-dk) var(--aqua-dk) var(--aqua-lt); display: flex; align-items: center; justify-content: center; white-space: nowrap; }
.sidebar .btnframe { margin-top: 3px; height: 27px; border-left: 0; padding-left: 0; }
.matrix { justify-content: flex-start; padding-left: 2px; }
.layerarea { flex: 1; margin-top: 3px; border-right: 2px solid var(--teal-lt); border-bottom: 2px solid var(--teal-lt); border-top: 2px solid var(--teal-dk); }
.layers { width: 122px; padding: 2px 2px 10px 2px; border: 1px solid #000; border-width: 0 1px 1px 0; box-shadow: 2px 2px 0 var(--teal-lt); display: flex; flex-direction: column; gap: 4px; }
.group { background: #000; padding: 0 1px 1px 2px; }
.layer { display: grid; grid-template-columns: 14px 14px 81px; gap: 2px; height: 16px; padding-top: 2px; }
.layer input { appearance: none; width: 14px; height: 14px; border: 2px solid #fff; background: #fff; box-shadow: inset 0 0 0 2px #000; }
.layer.active input { border-color: #0000d8; }
.layer span { grid-column: 3; height: 14px; padding-left: 1px; overflow: hidden; background: var(--aqua); font-size: 12px; line-height: 13px; white-space: nowrap; display: flex; justify-content: space-between; align-items: center; padding-right: 1px; }
.layer .white { background: #fff; }
.layer .green { background: #00a57c; }
.layer .orange { background: var(--orange); }
.layer .steel { background: #9bb5c3; }
.layer .gray { background: #dadada; }
.layer i.red { background: #f00; }
.layer i.lime { background: #429a05; }
.selected { height: 20px; margin-top: 3px; background: var(--orange); border: 1px solid #000; border-left: 0; padding-left: 1px; font-size: 12px; line-height: 17px; }

.canvas { flex: 1; position: relative; overflow: hidden; background: #000; }
.board { position: absolute; left: 0; top: 0; }
.outline path { stroke: #4a8f1a; fill: none; }
.outline .edge { stroke: #3b7f72; stroke-width: 2; }
.gridrow path { stroke: #5c8a30; stroke-width: 2; stroke-dasharray: 2 29.2; shape-rendering: crispEdges; }
.trace path { fill: none; stroke: #559420; stroke-width: 2; stroke-dasharray: 2 6.8; shape-rendering: crispEdges; }
.trace .fine { stroke-dasharray: 2 4; }
.mark { fill: none; stroke: #f5f53a; stroke-width: 2; }
.cadtable { position: absolute; left: 382px; top: 666px; border-collapse: collapse; table-layout: fixed; width: 542px; height: 134px; color: #4a9418; font: 14px/16px var(--mono); }
.cadtable .c1 { width: 70px; } .cadtable .c2 { width: 140px; } .cadtable .c3 { width: 166px; } .cadtable .c4 { width: 79px; } .cadtable .c5 { width: 87px; }
.cadtable th, .cadtable td { border: 1px solid #429a05; height: 26px; padding: 7px 0 0; font-weight: normal; text-align: center; white-space: nowrap; }
.cadtable td:nth-child(3), .cadtable th:nth-child(3), .cadtable td:nth-child(5), .cadtable th:nth-child(5) { text-align: left; padding-left: 17px; }
.cadtable td:nth-child(4) { text-align: right; padding-right: 36px; }
.cadtable svg { margin: 0 auto; }

.toolpad { position: absolute; right: 0; top: 0; width: 164px; height: 166px; padding: 1px 1px 2px 2px; background: #000; border: 1px solid var(--aqua-dk); display: grid; grid-template-columns: repeat(4, 38px); grid-auto-rows: 38px; gap: 2px; }
.ic { width: 30px; height: 30px; fill: none; stroke: #000; border: 1px solid #000; }
.ic .w2 { stroke-width: 2; } .ic .f { fill: #000; }
.alert { outline: 3px solid #e01010; outline-offset: -5px; }

.cmdbar { height: 34px; display: flex; background: var(--cream); border-bottom: 2px solid #000; font-size: 12px; }
.cmdbar button { width: 30px; border: 2px solid #000; border-width: 0 2px 1px 0; box-shadow: inset 0 0 0 2px var(--cream), inset 0 0 0 3px #c9c99a; display: flex; align-items: center; justify-content: center; background: var(--cream); }
.cmdbar .first { width: 28px; } .cmdbar .wide { width: 32px; }
.cmdbar button svg { fill: none; stroke: #000; }
.cmdbar button.on { border: 1px solid #000; box-shadow: inset 0 0 0 2px var(--teal), inset 0 0 0 4px #e6e6b8; }
.xy { width: 48px; padding: 7px 0 0 3px; border-left: 1px solid var(--teal); border-right: 1px solid var(--teal); }
.xyfield { width: 173px; padding: 2px; border: 1px solid #000; display: flex; margin-right: 1px; }
.field { width: 100%; height: 27px; border: 2px solid; border-color: var(--aqua-dk) var(--aqua-lt) var(--aqua-lt) var(--aqua-dk); background: repeating-linear-gradient(#000 0 1px, transparent 1px 2px) 4px 1px / 1px 15px no-repeat, linear-gradient(#0008, #0008) 2px 1px / 5px 1px no-repeat, linear-gradient(#0008, #0008) 2px 15px / 5px 1px no-repeat var(--aqua); padding: 0 0 7px 5px; }
.field.cream { border-color: #9c9c78 #d0d0a0 #d0d0a0 #9c9c78; background-color: var(--cream); height: 28px; }
.hint { padding: 7px 0 0 2px; border-left: 2px solid #000; margin-left: 1px; white-space: nowrap; }
.status { height: 29px; padding: 4px 0 0 719px; background: var(--cyan); border: solid; border-width: 2px 0 1px; border-color: #6d9c9c #000 #000; box-shadow: inset 0 -3px 0 #6d9c9c; font-size: 12px; white-space: nowrap; overflow: hidden; }
.footer { height: 11px; background: var(--cream); border-bottom: 2px solid #dfe5ea; }

.window { position: absolute; }
.drill { left: 176px; top: 20px; width: 808px; background: var(--teal); border-radius: 8px; overflow: hidden; padding-bottom: 1px; outline: 1px solid #444; outline-offset: -1px; }
.drill .titlebar, .measure .titlebar { height: 31px; padding-left: 8px; border-top: 1px solid #bbb; }
.drill .wintitle, .measure .wintitle { margin-left: 5px; }
.row { display: flex; }
.cell { display: flex; align-items: center; background: var(--aqua); border: 1px solid #000; }
.r1 { height: 33px; padding-right: 194px; }
.layerbtn { width: 167px; padding: 1px; }
.spread { justify-content: space-between; padding: 0 14px 0 2px; }
.layerfield { width: 110px; padding: 2px; }
.slots { margin-left: auto; width: 187px; padding: 1px 1px 1px 9px; justify-content: space-between; }
.opt { position: relative; display: flex; width: 100%; height: 100%; }
.opt::after { content: ""; position: absolute; right: 6px; top: 50%; width: 12px; height: 7px; margin-top: -3px; border: 2px solid; border-color: var(--aqua-lt) var(--aqua-dk) var(--aqua-dk) var(--aqua-lt); pointer-events: none; }
.opt select { appearance: none; width: 100%; padding-left: 2px; }
.slots .opt { width: 115px; }
.slots select { padding-left: 30px; }
.r2 { height: 29px; }
.thick { width: 308px; padding-left: 1px; gap: 3px; white-space: nowrap; }
.thick .field { width: 105px; height: 24px; margin-left: 11px; padding-bottom: 4px; }
.params { width: 177px; padding: 1px; margin-right: 2px; }
.hasl { width: 127px; padding: 2px; }
.hasl .field { height: 24px; padding-bottom: 4px; }
.tableframe { position: relative; height: 305px; margin: 1px 2px 0; padding-left: 1px; border: 2px solid; border-color: var(--teal-dk) var(--teal-lt) var(--teal-lt) var(--teal-dk); overflow: hidden; }
.tools { border-collapse: collapse; table-layout: fixed; width: 834px; }
.t0 { width: 27px; } .t1 { width: 67px; } .t2 { width: 60px; } .t3 { width: 83px; } .t4 { width: 115px; } .t5 { width: 74px; }
.tools th, .tools td { border: 2px solid #000; padding: 0; vertical-align: middle; }
.tools thead tr { height: 37px; }
.tools th { background: var(--cyan); line-height: 15px; padding-bottom: 3px; }
.tools tbody tr { height: 33px; }
.tools td { height: 33px; }
.tools .num { text-align: right; padding-right: 4px; }
.wh { background: #fff; } .ye { background: var(--cream); }
.tools .field { display: block; margin: 0 auto; width: calc(100% - 4px); background-color: inherit; border-color: #999 #ccc #ccc #999; }
.wh .field { background-color: #fff; }
.ye .field { background-color: var(--cream); border-color: #9c9c78 #d0d0a0 #d0d0a0 #9c9c78; }
.tools .solid { background-image: linear-gradient(#000, #000), linear-gradient(#000, #000), linear-gradient(#000, #000); }
.ye .opt { height: 28px; margin-left: 5px; width: calc(100% - 6px); }
.ye .opt select { background: var(--cream); }
.ye .opt select, .ye .opt::after { border-color: #e6e6b8 #9c9c78 #9c9c78 #c9c99a; }
.tbtn { display: block; margin: 0 auto; width: 62px; height: 28px; text-align: left; padding-left: 2px; border: 2px solid; border-color: var(--teal-lt) var(--teal-dk) var(--teal-dk) var(--teal-lt); background: var(--teal); }
.tbtn.sel { background: var(--orange); }
.sym { display: block; margin: 0 auto; width: 20px; height: 20px; border: 1px solid #000; background: linear-gradient(#000, #000) 9px 4px / 1px 12px no-repeat, linear-gradient(#000, #000) 3px 10px / 13px 1px no-repeat #fff; text-align: right; }
.sym sup { display: block; font: 7px/6px var(--mono); }
.callout { position: absolute; filter: drop-shadow(3px 4px 2px #0008); pointer-events: none; }
.callout ellipse { fill: none; stroke: #a5a010; stroke-width: 3; }
.callout .inner { stroke: #f6f63c; stroke-width: 2; }
.tableframe .callout { left: 312px; top: 27px; }
.scrollbar { display: flex; height: 16px; margin: 3px 2px 4px 1px; border: 2px solid; border-color: var(--teal-dk) var(--teal-lt) var(--teal-lt) var(--teal-dk); background: #45b296; }
.thumb { flex: 1; margin-right: 28px; background: var(--teal); border: 2px solid; border-color: var(--teal-lt) var(--teal-dk) var(--teal-dk) var(--teal-lt); }
.r3 { height: 35px; border: solid #000; border-width: 1px 0; padding-right: 1px; }
.r3 .btnframe, .r3 .cell { border-width: 0 1px; padding: 2px; }
.current { width: 42px; margin: 0 1px 0 1px; padding: 7px 0 0 3px; background: var(--orange); border: 1px solid #000; font-size: 12px; }
.f59 { width: 59px; } .f35 { width: 35px; } .f50 { width: 50px; } .f30 { width: 30px; }
.f30 svg { fill: none; stroke: #000; }
.f30.dark { background: #000; }
.index { width: 60px; padding: 8px 0 0 2px; }
.r3 .idx { width: 60px; height: 30px; margin: 1px 3px 0 0; background-color: var(--teal); border-color: var(--teal-dk) var(--teal-lt) var(--teal-lt) var(--teal-dk); }
.units { width: 88px; margin-left: auto; }
.r3 .cell { padding-left: 5px; }
.regular { width: 115px; }
.r4 { height: 35px; margin-top: 3px; padding: 0 2px; justify-content: flex-end; border-top: 1px solid #000; }
.r4 .combine { width: 132px; }
.merge { width: 360px; padding: 2px 1px 2px 10px; justify-content: space-between; border-right: 0; white-space: nowrap; }
.merge .opt { width: 214px; }
.mergebtn { width: 57px; border-left: 0; }
.r5 { display: grid; grid-template-columns: repeat(4, 1fr); height: 29px; margin: -1px 2px 0 1px; }

.measure { right: 0; top: 246px; width: 184px; background: var(--teal); border-radius: 8px 8px 0 8px; overflow: hidden; padding-bottom: 1px; }
.measure .titlebar { border: 0; height: 30px; }
.measure .winbuttons button { width: 30px; }
.modes { margin: 0; padding: 0; border: 0; display: flex; flex-direction: column; background: #000; min-width: 0; }
.modes legend { display: block; width: 100%; height: 17px; padding: 0; text-align: center; background: var(--aqua); border: 1px solid #000; line-height: 15px; }
.modes label { height: 27px; margin: 1px 1px 1px 2px; padding-left: 4px; display: flex; align-items: center; gap: 4px; background: var(--aqua); white-space: nowrap; line-height: 26px; }
.modes input { appearance: none; flex: none; width: 10px; height: 10px; margin: 2px; transform: rotate(45deg); border: 2px solid; border-color: var(--aqua-lt) var(--aqua-dk) var(--aqua-dk) var(--aqua-lt); background: var(--aqua); }
.modes input:checked { background: #d0104c; border-color: var(--aqua-dk) #fff #fff var(--aqua-dk); }
.measure > .btnframe { margin-top: 31px; height: 27px; }

.excel { left: 1095px; right: 0; top: 640px; bottom: 0; overflow: hidden; background: #c3dafb; border-radius: 8px 0 0 0; border-left: 1px solid #7d9cc8; font: 12px/16px var(--cjk); color: #1e3f7c; display: flex; flex-direction: column; }
.excel > * { flex: none; }
.xltitle { height: 29px; background: #fff; display: flex; align-items: center; padding-left: 33px; white-space: nowrap; }
.quick { display: flex; align-items: center; gap: 5px; height: 22px; width: 110px; padding-left: 19px; border: 1px solid #b9bdc6; border-left: 0; border-radius: 0 11px 11px 0; background: #f6f8fb; }
.qmore { margin-left: 8px; }
.doc { margin-left: auto; margin-right: -58px; color: #000; }
.arr { flex: none; width: 0; height: 0; border: 3px solid transparent; border-top: 3px solid #48689c; border-bottom: 0; margin: 0 3px; }
.arr.dim { border-top-color: #a9b5c6; margin: 0 2px; }
.arr.blk { border-width: 5px 4px 0; border-top-color: #000; }
.tabs { height: 27px; background: #bdd8fe; padding: 1px 0 0 46px; display: flex; white-space: nowrap; }
.tabs button { padding: 0 12px 2px; }
.tabs button + button { margin-left: 5px; }
.tabs .cur { padding: 0 11px; background: linear-gradient(#fff, #e3eefb); border: 1px solid #8fb3e6; border-bottom: 0; border-radius: 4px 4px 0 0; }
.orb { position: absolute; left: 2px; top: 6px; }
.ribbon { height: 106px; display: flex; gap: 3px; padding: 1px 2px 6px 2px; background: #d2e1f4; border-top: 1px solid #8fb3e6; border-bottom: 2px solid #8ccbe0; }
.grp { flex: none; display: flex; flex-direction: column; border: 1px solid #a9c1de; border-radius: 3px; background: linear-gradient(#dfe9f5 0 14px, #cbdbee 15px, #dbe8f6); overflow: hidden; }
.clip { width: 112px; } .font { width: 234px; } .align { width: 229px; } .number { width: 136px; } .styles { width: 180px; }
.grp .body { height: 81px; display: flex; padding: 4px; gap: 7px; }
.grp .body.col { flex-direction: column; padding: 11px 3px 0; gap: 11px; }
.grp .name { flex: 1; display: flex; align-items: center; justify-content: center; position: relative; background: #c0d7f1; color: #4567a5; font-size: 12px; }
.launch { position: absolute; right: 4px; width: 7px; height: 7px; border: 1px solid #6b87b3; border-width: 1px 0 0 1px; box-shadow: inset -2px -2px 0 #6b87b3; }
.paste { width: 38px; display: flex; flex-direction: column; align-items: center; gap: 5px; white-space: nowrap; }
.paste.wide { width: 50px; line-height: 17px; }
.stack { display: flex; flex-direction: column; gap: 6px; }
.stack button { display: flex; gap: 3px; white-space: nowrap; }
.line { display: flex; gap: 3px; height: 22px; align-items: center; }
.xopt { position: relative; height: 25px; }
.xopt::after { content: ""; position: absolute; right: 4px; top: 11px; border: 3px solid transparent; border-top-color: #48689c; border-bottom: 0; pointer-events: none; }
.xsel { appearance: none; width: 100%; height: 25px; padding-left: 2px; border: 1px solid #abc1de; background: #eaf2fb; color: #000; }
.fname { width: 131px; margin-right: -3px; } .fsize { width: 47px; } .fnum { width: 128px; }
.set { display: flex; align-items: center; height: 22px; border: 1px solid #a3bbd9; border-radius: 2px; background: linear-gradient(#dde8f5, #cfddef); }
.set button { height: 20px; min-width: 22px; display: flex; align-items: center; justify-content: center; color: #222; }
.set button.serif { font: bold 14px/20px "Liberation Serif", serif; }
.set button.big { font-size: 17px; }
.set .arr { margin: 0 2px; }
.set .hot { background: linear-gradient(#fbd8a0, #fdb94c); }
.set button.fcolor { color: #3d63a8; border-bottom: 4px solid #e01010; font-size: 16px; line-height: 14px; height: 18px; min-width: 16px; margin: 0 3px; }
.set .wen { flex-direction: column; }
.wen small { color: #222; font-size: 9px; line-height: 9px; }
.dec small { font: 9px/9px "Liberation Sans", sans-serif; text-align: right; }
.al { width: 16px; height: 15px; fill: none; stroke: #111; }
.align .line .set + .txt { margin-left: 17px; }
.align .line:last-child .set + .txt { margin-left: 5px; }
.txt { display: flex; align-items: center; gap: 3px; white-space: nowrap; }
.txt .arr { margin-left: 3px; }
.security { height: 33px; margin: 6px 0 5px 2px; display: flex; align-items: center; padding: 0 0 3px 3px; background: linear-gradient(#fdfeff, #e2f0fd); border: 1px solid #9ebce0; border-right: 0; white-space: nowrap; }
.security strong { margin: 0 12px 0 11px; font-weight: 500; }
.security button { width: 70px; height: 21px; margin-left: 12px; background: #fff; border: 1px solid #a7c3e0; }
.formula { height: 20px; display: flex; border: solid #7d9cc0; border-width: 1px 0; background: #c9e9cd; margin-bottom: 4px; }
.namebox { width: 139px; text-align: center; color: #000; font: 13px/18px "Liberation Serif", serif; }
.drop { width: 20px; display: flex; align-items: center; justify-content: center; background: #fff; }
.fx { width: 76px; display: flex; justify-content: space-between; align-items: center; padding: 0 6px 0 2px; background: linear-gradient(#e4eefa, #a9c4e8); border-radius: 10px 0 0 10px; font: bold 15px/16px "Liberation Serif", serif; color: #333; border-right: 1px solid #7d9cc0; }
.fx sub { font-size: 10px; line-height: 10px; }
.knob { width: 10px; height: 10px; border-radius: 5px; background: radial-gradient(#fff, #aabfd8); }
.fline { flex: 1; }
.excel > .sheet { flex: 1; display: flex; flex-direction: column; background: #fff; color: #222; }
.colheads { display: flex; height: 20px; border: solid #7d9cc0; border-width: 1px 0; background: linear-gradient(#f4f7fb, #d8e0ec); font: 15px/18px "Liberation Serif", serif; }
.colheads span, .corner { flex: none; width: 72px; text-align: center; border-right: 1px solid #9eb6ce; }
.corner { width: 33px; background: linear-gradient(135deg, #a9c4ec 60%, #e8f0fa 60%); }
.colheads .on { background: linear-gradient(#f9d99f, #f1c15f); border-color: #e0953a; }
.rows { flex: 1; display: flex; min-height: 0; }
.rowheads { width: 33px; background: #e4ecf7; border-right: 1px solid #9eb6ce; font: 15px/17px "Liberation Serif", serif; text-align: center; }
.rowheads span { display: block; height: 19px; border-bottom: 1px solid #9eb6ce; }
.cells { flex: 1; position: relative; overflow: hidden; background: linear-gradient(#fff 0 127px, transparent 127px), repeating-linear-gradient(90deg, transparent 0 71px, #bcd3d0 71px 72px), linear-gradient(transparent 131px, #bcd3d0 131px 132px, transparent 132px), #c9e9cd; }
.drills { border-collapse: collapse; table-layout: fixed; width: 840px; color: #111; font: 16px/21px var(--ui); margin-left: 2px; }
.drills td { padding: 0; height: 21px; white-space: nowrap; }
.drills .dash td { font: 11px/16px var(--mono); height: 23px; vertical-align: bottom; white-space: pre; }
.d1 { width: 80px; } .d2 { width: 77px; } .d3 { width: 46px; } .d4 { width: 99px; } .d5 { width: 178px; }
.drills td:nth-child(4) { text-align: center; padding-left: 13px; }
.drills td:nth-child(5) { padding-left: 18px; }
.cells .callout { left: -3px; top: 32px; }
.ime { position: absolute; right: 3px; top: 146px; width: 198px; height: 25px; display: flex; align-items: center; justify-content: space-between; padding: 0 4px 0 0; background: #fff; border: 1px solid #d0dcea; }
.ime b { color: #0b6fd8; font-size: 15px; }
.sogou { margin-left: -4px; }
```
